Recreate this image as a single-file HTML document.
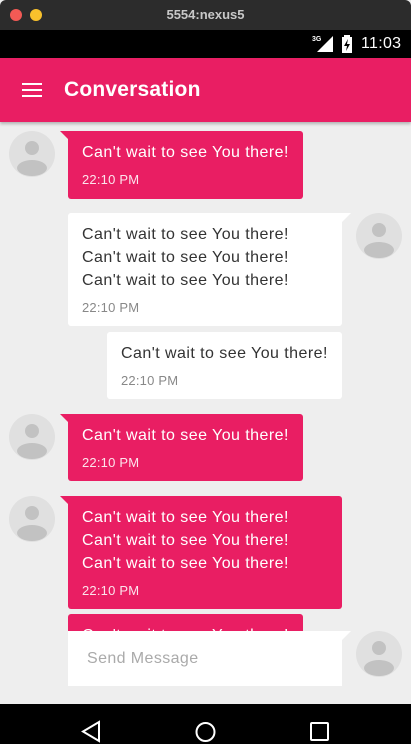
<!DOCTYPE html>
<html><head><meta charset="utf-8"><style>
*{margin:0;padding:0;box-sizing:border-box}
body{width:411px;height:744px;overflow:hidden;background:#eeeeee;font-family:"Liberation Sans",Roboto,sans-serif;position:relative}
.a{position:absolute}
.b{position:absolute;padding:10px 14px 0 14px;font-size:16px;line-height:23px;letter-spacing:0.45px}
.p{background:#e91e63;color:#fff;border-radius:0 3px 3px 3px}
.w{background:#fff;color:#333;border-radius:3px 0 3px 3px}
.t{font-size:13px;margin-top:8px;line-height:16px;letter-spacing:0.2px}
.p .t{color:#fce4ec}.w .t{color:#888}
.av{position:absolute;width:46px;height:46px;border-radius:50%;background:#e0e0e0;overflow:hidden}
.av:before{content:"";position:absolute;left:16px;top:10px;width:14px;height:14px;border-radius:50%;background:#c2c2c2}
.av:after{content:"";position:absolute;left:8px;top:29px;width:30px;height:16px;border-radius:50%;background:#c2c2c2}
.tl{position:absolute;width:0;height:0;border-top:9px solid #e91e63;border-left:9px solid transparent}
.tr{position:absolute;width:0;height:0;border-top:9px solid #fff;border-right:9px solid transparent}
</style></head><body>
<div class="a" style="left:0;top:0;width:411px;height:30px;background:#2c2c2c;border-radius:6px 6px 0 0"></div>
<div class="a" style="left:10px;top:9px;width:12px;height:12px;border-radius:50%;background:#f25a55"></div>
<div class="a" style="left:30px;top:9px;width:12px;height:12px;border-radius:50%;background:#f8c12c"></div>
<div class="a" style="left:0;top:7px;width:411px;text-align:center;color:#c8c8c8;font-size:13px;font-weight:bold">5554:nexus5</div>
<div class="a" style="left:0;top:30px;width:411px;height:28px;background:#000"></div>
<div class="a" style="left:312px;top:36px;color:#fff;font-size:7px;font-weight:bold">3G</div>
<svg class="a" style="left:316px;top:36px" width="18" height="17"><polygon points="17,0 17,16 1,16" fill="#fff"/></svg>
<svg class="a" style="left:341px;top:35px" width="12" height="18"><rect x="3" y="0" width="6" height="3" fill="#fff"/><rect x="1" y="2" width="10" height="16" fill="#fff"/><polygon points="7,4 3,11 6,11 5,16 9,9 6,9" fill="#000"/></svg>
<div class="a" style="left:361px;top:35px;color:#fff;font-size:16px;letter-spacing:0.3px">11:03</div>
<div class="a" style="left:0;top:58px;width:411px;height:64px;background:#e91e63;box-shadow:0 2px 3px rgba(0,0,0,.25)"></div>
<div class="a" style="left:22px;top:83px;width:20px;height:2px;background:#fff;box-shadow:0 6px 0 #fff,0 12px 0 #fff"></div>
<div class="a" style="left:64px;top:78px;color:#fff;font-size:21px;font-weight:bold;letter-spacing:0.2px">Conversation</div>

<div class="av" style="left:9px;top:131px"></div>
<div class="tl" style="left:60px;top:131px"></div>
<div class="b p" style="left:68px;top:131px;width:235px;height:68px">Can't wait to see You there!<div class="t">22:10 PM</div></div>

<div class="av" style="left:356px;top:213px"></div>
<div class="tr" style="left:342px;top:213px"></div>
<div class="b w" style="left:68px;top:213px;width:274px;height:113px">Can't wait to see You there!<br>Can't wait to see You there!<br>Can't wait to see You there!<div class="t">22:10 PM</div></div>

<div class="b w" style="left:107px;top:332px;width:235px;height:67px;border-radius:3px">Can't wait to see You there!<div class="t">22:10 PM</div></div>

<div class="av" style="left:9px;top:414px"></div>
<div class="tl" style="left:60px;top:414px"></div>
<div class="b p" style="left:68px;top:414px;width:235px;height:67px">Can't wait to see You there!<div class="t">22:10 PM</div></div>

<div class="av" style="left:9px;top:496px"></div>
<div class="tl" style="left:60px;top:496px"></div>
<div class="b p" style="left:68px;top:496px;width:274px;height:113px">Can't wait to see You there!<br>Can't wait to see You there!<br>Can't wait to see You there!<div class="t">22:10 PM</div></div>

<div class="b p" style="left:68px;top:614px;width:235px;height:17px;overflow:hidden;border-radius:3px 3px 0 0">Can't wait to see You there!</div>

<div class="av" style="left:356px;top:631px"></div>
<div class="tr" style="left:342px;top:631px"></div>
<div class="a" style="left:68px;top:631px;width:274px;height:55px;background:#fff;color:#aaa;font-size:16px;padding:19px 0 0 19px;letter-spacing:0.4px">Send Message</div>

<div class="a" style="left:0;top:704px;width:411px;height:40px;background:#000"></div>
<svg class="a" style="left:80px;top:720px" width="24" height="24"><polygon points="19,2 19,21 3,11.5" fill="none" stroke="#fff" stroke-width="2"/></svg>
<svg class="a" style="left:194px;top:720px" width="24" height="24"><circle cx="11.5" cy="12" r="9" fill="none" stroke="#fff" stroke-width="2"/></svg>
<svg class="a" style="left:308px;top:720px" width="24" height="24"><rect x="3" y="3" width="17" height="17" rx="1" fill="none" stroke="#fff" stroke-width="2"/></svg>
</body></html>
